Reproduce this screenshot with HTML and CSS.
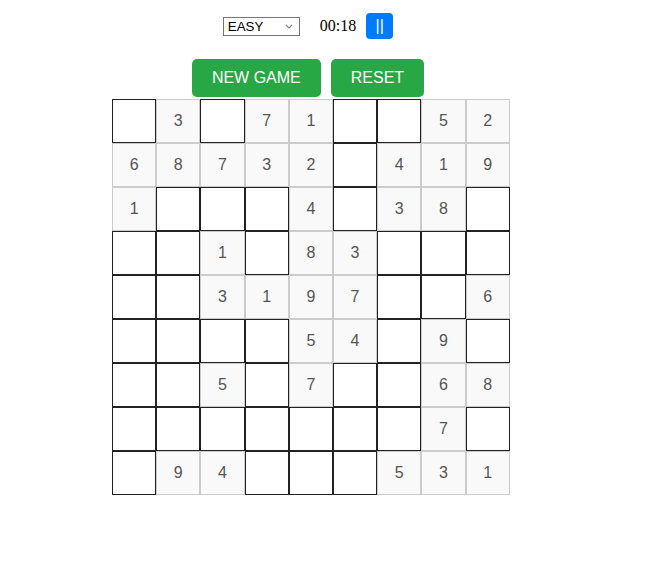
FILE: index.html
```html
<!DOCTYPE html>
<html>
<head>
<meta charset="utf-8">
<link rel="stylesheet" href="styles.css">
</head>
<body>
<div class="app">
  <div class="controls">
    <select class="level">
      <option>EASY</option>
      <option>MEDIUM</option>
      <option>HARD</option>
    </select>
    <span class="timer">00:18</span>
    <button class="pause">||</button>
  </div>
  <div class="actions">
    <button class="btn">NEW GAME</button>
    <button class="btn">RESET</button>
  </div>
  <div class="board">
    <div class="cell"></div><div class="cell fixed">3</div><div class="cell"></div><div class="cell fixed">7</div><div class="cell fixed">1</div><div class="cell"></div><div class="cell"></div><div class="cell fixed">5</div><div class="cell fixed">2</div>
    <div class="cell fixed">6</div><div class="cell fixed">8</div><div class="cell fixed">7</div><div class="cell fixed">3</div><div class="cell fixed">2</div><div class="cell"></div><div class="cell fixed">4</div><div class="cell fixed">1</div><div class="cell fixed">9</div>
    <div class="cell fixed">1</div><div class="cell"></div><div class="cell"></div><div class="cell"></div><div class="cell fixed">4</div><div class="cell"></div><div class="cell fixed">3</div><div class="cell fixed">8</div><div class="cell"></div>
    <div class="cell"></div><div class="cell"></div><div class="cell fixed">1</div><div class="cell"></div><div class="cell fixed">8</div><div class="cell fixed">3</div><div class="cell"></div><div class="cell"></div><div class="cell"></div>
    <div class="cell"></div><div class="cell"></div><div class="cell fixed">3</div><div class="cell fixed">1</div><div class="cell fixed">9</div><div class="cell fixed">7</div><div class="cell"></div><div class="cell"></div><div class="cell fixed">6</div>
    <div class="cell"></div><div class="cell"></div><div class="cell"></div><div class="cell"></div><div class="cell fixed">5</div><div class="cell fixed">4</div><div class="cell"></div><div class="cell fixed">9</div><div class="cell"></div>
    <div class="cell"></div><div class="cell"></div><div class="cell fixed">5</div><div class="cell"></div><div class="cell fixed">7</div><div class="cell"></div><div class="cell"></div><div class="cell fixed">6</div><div class="cell fixed">8</div>
    <div class="cell"></div><div class="cell"></div><div class="cell"></div><div class="cell"></div><div class="cell"></div><div class="cell"></div><div class="cell"></div><div class="cell fixed">7</div><div class="cell"></div>
    <div class="cell"></div><div class="cell fixed">9</div><div class="cell fixed">4</div><div class="cell"></div><div class="cell"></div><div class="cell"></div><div class="cell fixed">5</div><div class="cell fixed">3</div><div class="cell fixed">1</div>
  </div>
</div>
</body>
</html>
```
FILE: styles.css
```css
body {
  margin: 8px;
  background: #fff;
  font-family: "Liberation Serif", serif;
}
.app {
  width: 600px;
}
.controls {
  display: flex;
  justify-content: center;
  align-items: center;
  padding-top: 5px;
  height: 26px;
}
.level {
  -webkit-appearance: none;
  appearance: none;
  box-sizing: border-box;
  width: 77px;
  height: 19px;
  margin: 0 20px 0 0;
  font-family: "Liberation Sans", Arial, sans-serif;
  font-size: 13.33px;
  line-height: 17px;
  border: 1px solid #767676;
  border-radius: 0;
  color: #000;
  padding: 0 0 0 4px;
  background: #fff url("data:image/svg+xml;utf8,<svg xmlns='http://www.w3.org/2000/svg' width='8' height='5' viewBox='0 0 8 5'><path d='M1 1l3 3 3-3' fill='none' stroke='%23888' stroke-width='1.2'/></svg>") no-repeat right 6px center;
}
.timer {
  font-family: "Liberation Serif", serif;
  font-size: 16px;
  color: #000;
  margin-right: 10px;
}
.pause {
  width: 27px;
  height: 26px;
  padding: 0;
  border: none;
  border-radius: 4px;
  background: #007bff;
  color: #fff;
  font-family: "Liberation Sans", Arial, sans-serif;
  font-size: 16px;
  line-height: 26px;
}
.actions {
  display: flex;
  justify-content: center;
  gap: 10px;
  margin-top: 20px;
}
.btn {
  padding: 10px 20px;
  border: none;
  border-radius: 5px;
  background: #28a745;
  color: #fff;
  font-family: "Liberation Sans", Arial, sans-serif;
  font-size: 16px;
  line-height: 18px;
}
.board {
  display: grid;
  grid-template-columns: repeat(9, 44.2px);
  grid-template-rows: repeat(9, 44px);
  width: 398px;
  margin: 2px 0 0 104px;
}
.cell {
  box-sizing: border-box;
  border: 1px solid #222;
  background: #fff;
  display: flex;
  align-items: center;
  justify-content: center;
  font-family: "Liberation Sans", Arial, sans-serif;
  font-size: 16px;
  color: #555;
}
.cell.fixed {
  border-color: #ccc;
  background: #f9f9f9;
}
```
